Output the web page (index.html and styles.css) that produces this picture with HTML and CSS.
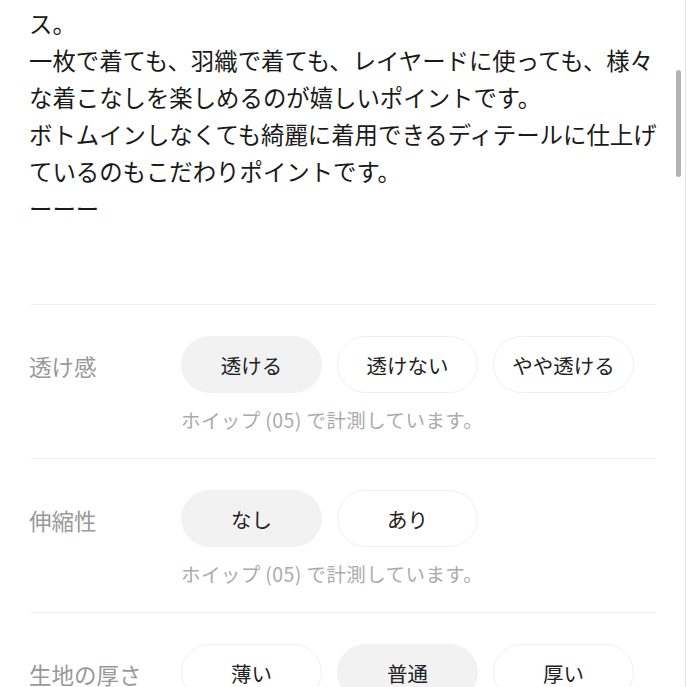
FILE: index.html
```html
<!DOCTYPE html>
<html lang="ja">
<head>
<meta charset="utf-8">
<link rel="stylesheet" href="styles.css">
</head>
<body>

<div class="page">
  <div class="content">
    <p class="desc">ハリ感と落ち感を兼ね備えた素材を使用した、上品なブラウス。<br>一枚で着ても、羽織で着ても、レイヤードに使っても、様々な着こなしを楽しめるのが嬉しいポイントです。<br>ボトムインしなくても綺麗に着用できるディテールに仕上げているのもこだわりポイントです。<br>ーーー</p>

    <div class="spec">
      <div class="label">透け感</div>
      <div class="body">
        <div class="pills">
          <span class="pill on">透ける</span>
          <span class="pill">透けない</span>
          <span class="pill">やや透ける</span>
        </div>
        <div class="note">ホイップ (05) で計測しています。</div>
      </div>
    </div>

    <div class="spec">
      <div class="label">伸縮性</div>
      <div class="body">
        <div class="pills">
          <span class="pill on">なし</span>
          <span class="pill">あり</span>
        </div>
        <div class="note">ホイップ (05) で計測しています。</div>
      </div>
    </div>

    <div class="spec">
      <div class="label">生地の厚さ</div>
      <div class="body">
        <div class="pills">
          <span class="pill">薄い</span>
          <span class="pill on">普通</span>
          <span class="pill">厚い</span>
        </div>
        <div class="note">ホイップ (05) で計測しています。</div>
      </div>
    </div>
  </div>
  <div class="thumb"></div>
</div>

</body>
</html>
```

FILE: styles.css
```css
body {
  margin: 0;
  background-color: #fff;
  font-family: "Noto Sans CJK JP", "Noto Sans", sans-serif;
  color: #1a1a1a;
}

.page {
  position: relative;
  width: 685px;
  height: 687px;
  overflow: hidden;
  border-right: 1px solid #e4e4e4;
}

.content {
  padding: 0 29px 0 29px;
}

.desc {
  margin: -32px 0 0 0;
  font-size: 23.4px;
  line-height: 37px;
  width: 636px;
}

.spec {
  margin: 77px 0 0 2px;
  border-top: 1px solid #eeeeee;
  padding: 31px 0 25px 0;
  display: grid;
  grid-template-columns: 150px 1fr;
}

.spec + .spec {
  margin-top: 0;
}

.label {
  height: 57px;
  display: flex;
  align-items: center;
  padding-top: 2px;
  box-sizing: border-box;
  margin-left: -2px;
  font-size: 22.5px;
  color: #999;
}

.pills {
  display: flex;
  gap: 15px;
}

.pill {
  width: 141px;
  height: 57px;
  box-sizing: border-box;
  border-radius: 29px;
  border: 1px solid #f0f0f0;
  background-color: #fff;
  display: flex;
  justify-content: center;
  align-items: center;
  font-size: 20.5px;
  color: #222;
}

.pill.on {
  background-color: #f2f2f2;
  border-color: #f2f2f2;
}

.note {
  margin-top: 13px;
  font-size: 19.5px;
  letter-spacing: 0.4px;
  line-height: 27px;
  color: #ababab;
}

.thumb {
  position: absolute;
  top: 70px;
  right: 4px;
  width: 5px;
  height: 107px;
  border-radius: 3px;
  background-color: #b3b3b3;
}
```
